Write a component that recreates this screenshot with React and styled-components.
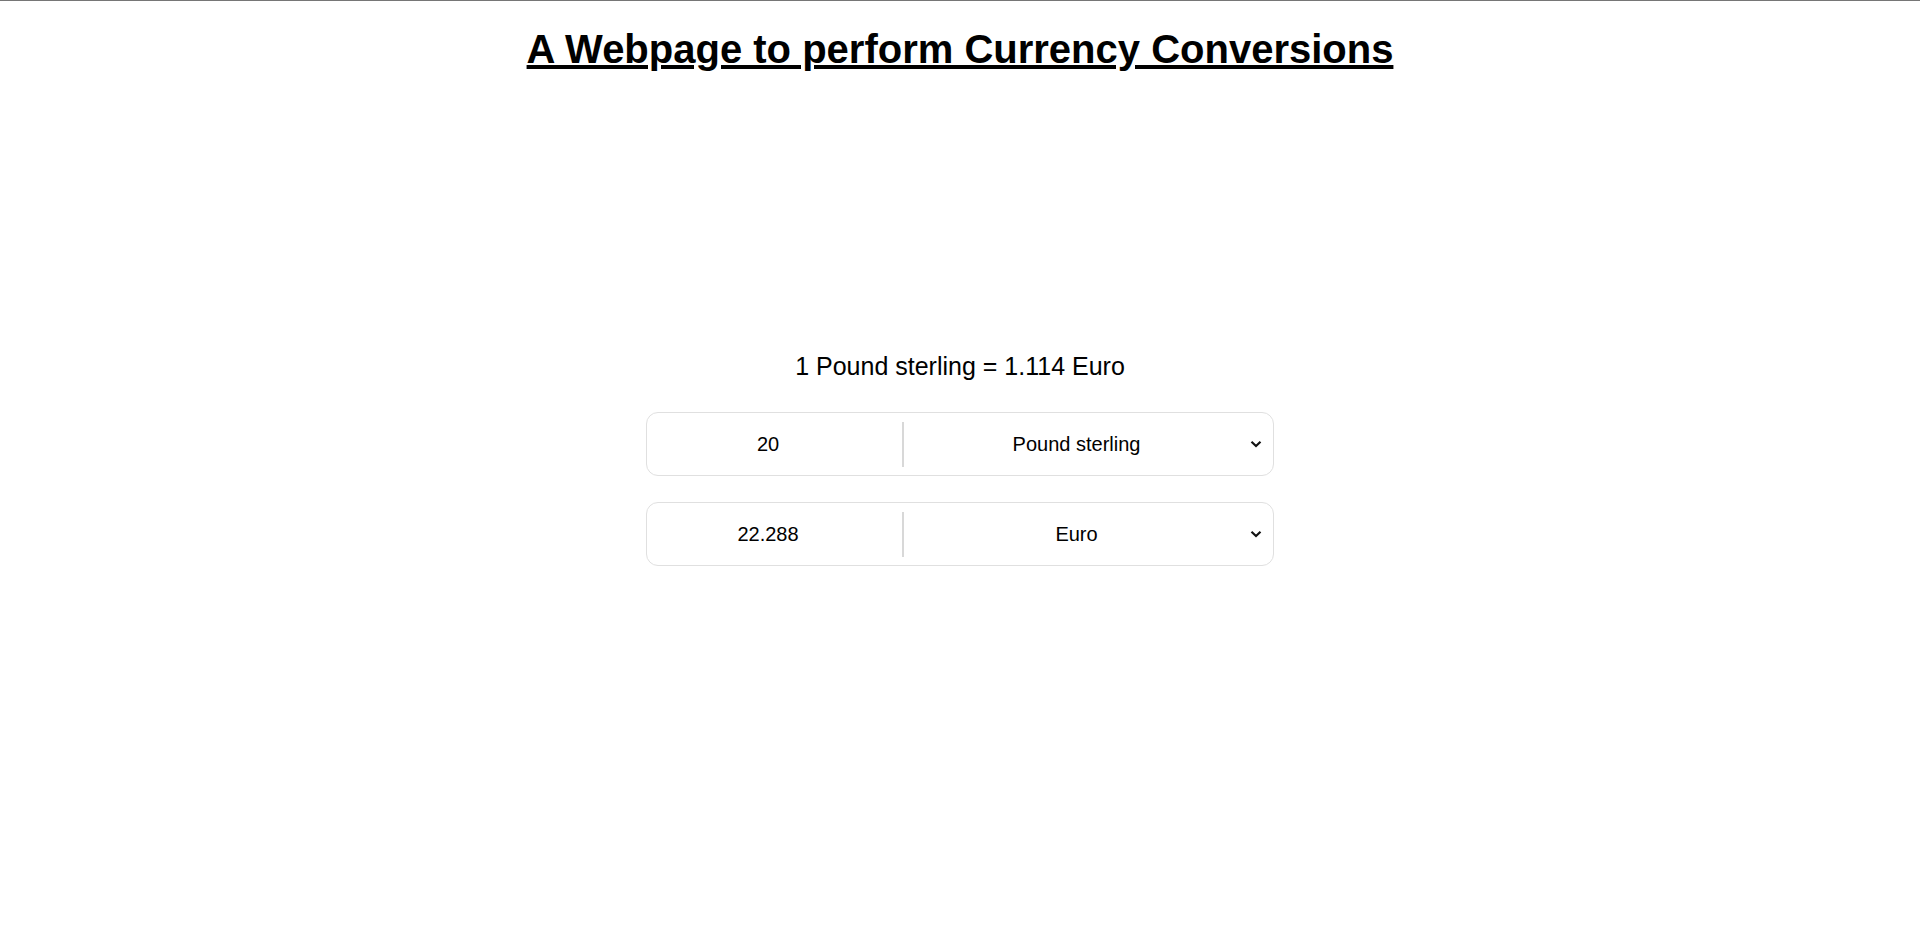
import { useState } from "react";
import styled, { createGlobalStyle } from "styled-components";

const GlobalStyle = createGlobalStyle`
  html, body {
    margin: 0;
    padding: 0;
    background: #ffffff;
    font-family: "Liberation Sans", Arial, sans-serif;
    color: #000;
  }
`;

const PageWrap = styled.div`
  border-top: 1px solid #767676;
  min-height: 941px;
  display: flex;
  flex-direction: column;
  align-items: center;
`;

const Title = styled.h1`
  margin: 25px 0 0;
  font-size: 40px;
  font-weight: 700;
  line-height: 46px;
  text-decoration: underline;
`;

const Converter = styled.section`
  margin-top: 280px;
  display: flex;
  flex-direction: column;
  align-items: center;
`;

const RateText = styled.div`
  font-size: 25px;
  line-height: 28px;
  margin-bottom: 32px;
`;

const Row = styled.div`
  width: 628px;
  height: 64px;
  box-sizing: border-box;
  border: 1px solid #e0e0e0;
  border-radius: 12px;
  display: flex;
  align-items: center;
  & + & {
    margin-top: 26px;
  }
`;

const AmountInput = styled.input`
  flex: 0 0 242px;
  width: 242px;
  height: 100%;
  box-sizing: border-box;
  border: none;
  outline: none;
  background: transparent;
  padding: 0;
  text-align: center;
  font-family: "Liberation Sans", Arial, sans-serif;
  font-size: 20px;
  color: #000;
`;

const Divider = styled.div`
  flex: 0 0 2px;
  height: 45px;
  margin-left: 13px;
  background: #d8d8d8;
`;

const SelectWrap = styled.div`
  position: relative;
  flex: 1;
  height: 100%;
`;

const CurrencySelect = styled.select`
  appearance: none;
  width: 100%;
  height: 100%;
  border: none;
  outline: none;
  background: transparent;
  padding: 0 24px 0 0;
  text-align: center;
  text-align-last: center;
  font-family: "Liberation Sans", Arial, sans-serif;
  font-size: 20px;
  color: #000;
  cursor: pointer;
`;

const Chevron = styled.svg`
  position: absolute;
  right: 11px;
  top: 50%;
  margin-top: -4px;
  width: 12px;
  height: 8px;
  pointer-events: none;
`;

const CURRENCIES = {
  GBP: { name: "Pound sterling", perGbp: 1 },
  EUR: { name: "Euro", perGbp: 1.1144 },
  USD: { name: "United States dollar", perGbp: 1.2702 },
  JPY: { name: "Japanese yen", perGbp: 187.41 },
};

const format = (n) => String(Math.round(n * 1000) / 1000);

const CurrencyRow = ({ amount, onAmount, currency, onCurrency }) => (
  <Row>
    <AmountInput
      type="text"
      value={amount}
      onChange={(e) => onAmount(e.target.value)}
    />
    <Divider />
    <SelectWrap>
      <CurrencySelect value={currency} onChange={(e) => onCurrency(e.target.value)}>
        {Object.entries(CURRENCIES).map(([code, c]) => (
          <option key={code} value={code}>
            {c.name}
          </option>
        ))}
      </CurrencySelect>
      <Chevron viewBox="0 0 12 8">
        <path d="M1.5 1.8 L6 6 L10.5 1.8" fill="none" stroke="#111" strokeWidth="2.2" />
      </Chevron>
    </SelectWrap>
  </Row>
);

export default function App() {
  const [from, setFrom] = useState("GBP");
  const [to, setTo] = useState("EUR");
  const [amount, setAmount] = useState("20");
  const [fromSide, setFromSide] = useState(true);

  const rate = CURRENCIES[to].perGbp / CURRENCIES[from].perGbp;
  const num = parseFloat(amount) || 0;
  const fromAmount = fromSide ? amount : format(num / rate);
  const toAmount = fromSide ? format(num * rate) : amount;

  return (
    <>
      <GlobalStyle />
      <PageWrap>
        <Title>A Webpage to perform Currency Conversions</Title>
        <Converter>
          <RateText>
            1 {CURRENCIES[from].name} = {format(rate)} {CURRENCIES[to].name}
          </RateText>
          <CurrencyRow
            amount={fromAmount}
            onAmount={(v) => {
              setAmount(v);
              setFromSide(true);
            }}
            currency={from}
            onCurrency={setFrom}
          />
          <CurrencyRow
            amount={toAmount}
            onAmount={(v) => {
              setAmount(v);
              setFromSide(false);
            }}
            currency={to}
            onCurrency={setTo}
          />
        </Converter>
      </PageWrap>
    </>
  );
}
